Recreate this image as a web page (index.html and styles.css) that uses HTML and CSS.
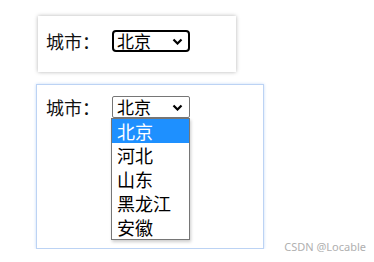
FILE: index.html
```html
<!DOCTYPE html>
<html lang="zh-CN">
<head>
  <meta charset="UTF-8" />
  <title>城市选择</title>
  <link rel="stylesheet" href="styles.css">
</head>
<body>
  <div class="page">
    <!-- closed, focused select -->
    <div class="card card-closed">
      <div class="field">
        <span class="label">城市：</span>
        <div class="select select-focus">
          <span class="value">北京</span>
          <svg class="chevron" width="11" height="7" viewBox="0 0 11 7"><path d="M1.5 1.5 L5.5 5.5 L9.5 1.5" fill="none" stroke="#000" stroke-width="2.2"/></svg>
        </div>
      </div>
    </div>

    <!-- open select with list -->
    <div class="card card-open">
      <div class="field">
        <span class="label">城市：</span>
        <div class="select-wrap">
          <div class="select">
            <span class="value">北京</span>
            <svg class="chevron" width="11" height="7" viewBox="0 0 11 7"><path d="M1.5 1.5 L5.5 5.5 L9.5 1.5" fill="none" stroke="#000" stroke-width="2.2"/></svg>
          </div>
          <ul class="options">
            <li class="selected">北京</li>
            <li>河北</li>
            <li>山东</li>
            <li>黑龙江</li>
            <li>安徽</li>
          </ul>
        </div>
      </div>
    </div>
  </div>
  <div class="watermark">CSDN @Locable</div>
</body>
</html>
```

FILE: styles.css
```css
* {
  box-sizing: border-box;
  margin: 0;
  padding: 0;
}

body {
  background: #fff;
  color: #000;
  font-family: "Noto Sans CJK SC", "Noto Sans", sans-serif;
}

.page {
  padding-top: 16px;
}

.card {
  background: #fff;
}

.card-closed {
  width: 198px;
  height: 56px;
  margin-left: 38px;
  padding: 14px 8px 0;
  box-shadow: 0 0 4px rgba(0, 0, 0, 0.3);
}

.card-open {
  width: 228px;
  height: 165px;
  margin-top: 12px;
  margin-left: 36px;
  padding: 11px 9px 0;
  border: 1px solid #bcd3f4;
  box-shadow: 0 0 3px #c9dcf8;
}

.field {
  display: flex;
  align-items: center;
}

.label {
  width: 66px;
  font-size: 18px;
  line-height: 22px;
  color: #111;
}

.select-wrap {
  position: relative;
}

.select {
  display: flex;
  align-items: center;
  justify-content: space-between;
  width: 78px;
  height: 22px;
  padding: 0 6px 0 4px;
  border: 1px solid #767676;
  border-radius: 2px;
  font-size: 17px;
  line-height: 20px;
}

.select-focus {
  border: 2px solid #000;
  border-radius: 4px;
  padding-left: 3px;
  padding-right: 5px;
}

.chevron {
  display: block;
}

/* dropdown list lying over the card */
.options {
  position: absolute;
  top: 22px;
  left: -1px;
  width: 79px;
  list-style: none;
  background: #fff;
  border: 1px solid #767676;
  box-shadow: 1px 2px 3px rgba(0, 0, 0, 0.2);
}

.options li {
  height: 24px;
  padding-left: 5px;
  font-size: 18px;
  line-height: 24px;
  color: #000;
}

.options li.selected {
  background: #1e90ff;
  color: #fff;
}

.watermark {
  position: absolute;
  right: 8px;
  bottom: 8px;
  font-family: "Noto Sans", sans-serif;
  font-size: 11px;
  color: #b0b0b0;
}
```
